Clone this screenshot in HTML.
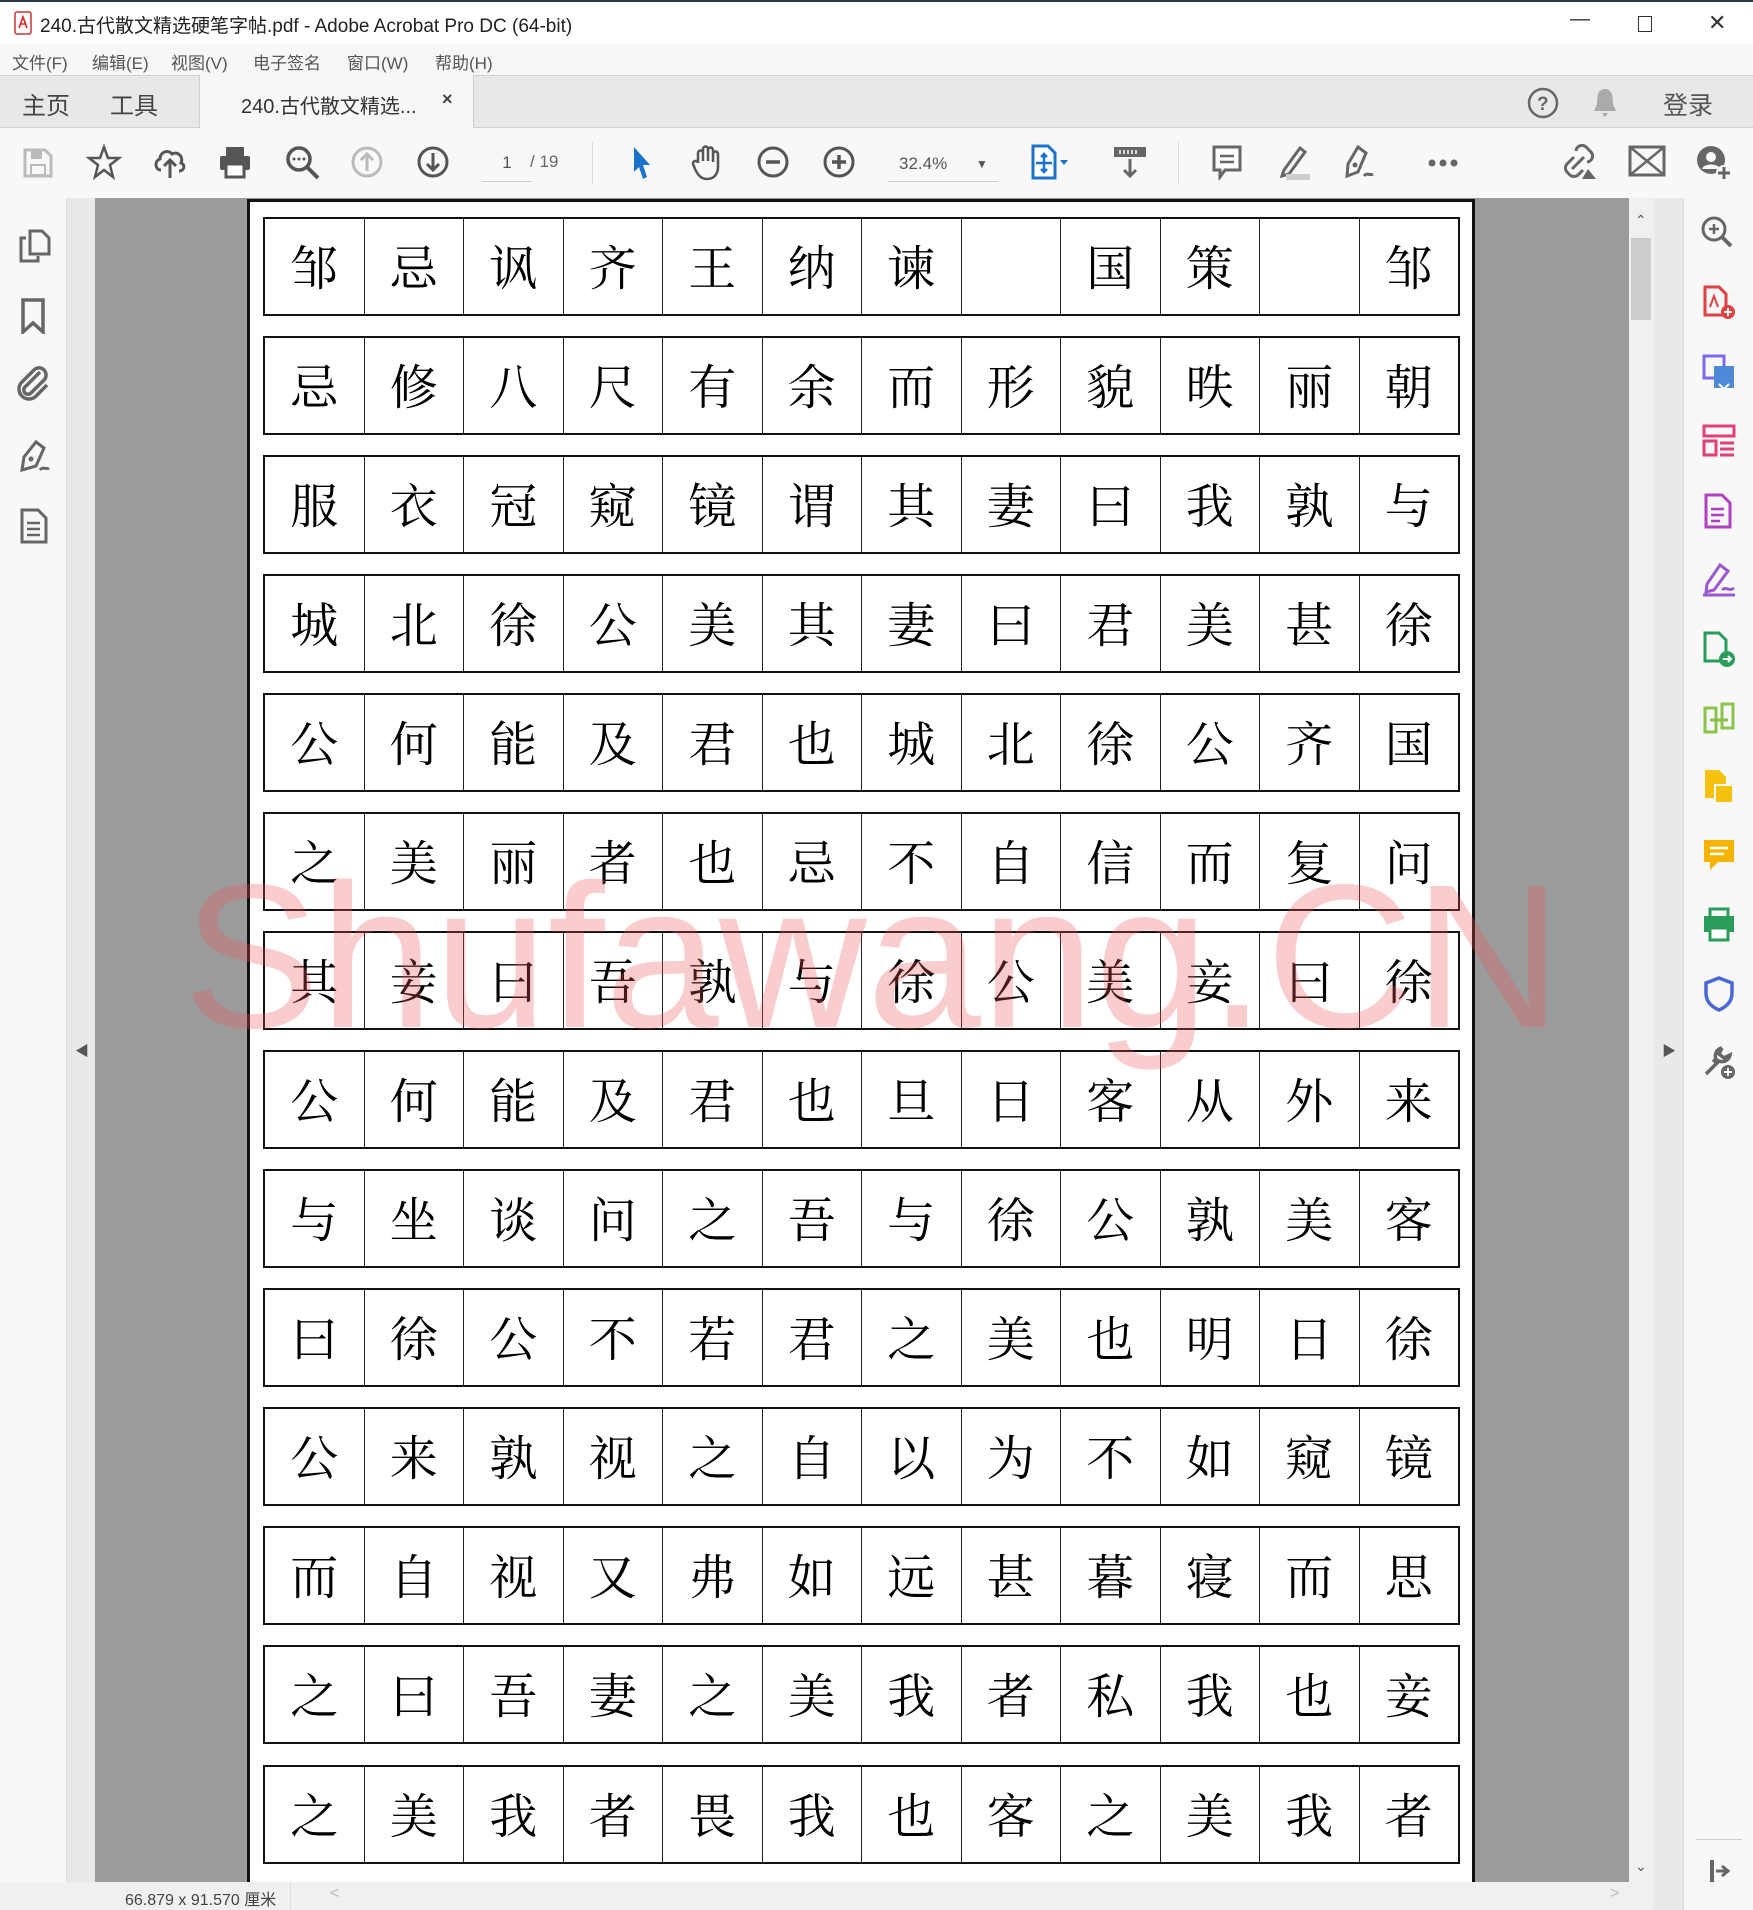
<!DOCTYPE html>
<html><head><meta charset="utf-8"><style>
*{margin:0;padding:0;box-sizing:border-box}
body{width:1753px;height:1910px;position:relative;overflow:hidden;background:#fff;font-family:"Liberation Sans","Noto Sans CJK SC",sans-serif;color:#333}
.a{position:absolute}
#title{left:0;top:0;width:1753px;height:44px;background:#fff;border-top:2px solid #2b3a4a}
#menu{left:0;top:44px;width:1753px;height:31px;background:#f7f7f7;font-size:17px;color:#555}
#menu span{position:absolute;top:5px}
#tabs{left:0;top:75px;width:1753px;height:53px;background:#e8e8e8;border-top:1px solid #d0d0d0;border-bottom:1px solid #d0d0d0}
#tb{left:0;top:128px;width:1753px;height:70px;background:#f8f8f8}
#lp{left:0;top:198px;width:67px;height:1684px;background:#f8f8f8;border-right:1px solid #ddd}
#ls{left:67px;top:198px;width:28px;height:1684px;background:#e9e9e9}
#gray{left:95px;top:198px;width:1534px;height:1684px;background:#9b9b9b}
#sb{left:1629px;top:198px;width:25px;height:1684px;background:#f0f0f0}
#rs{left:1654px;top:198px;width:29px;height:1712px;background:#e9e9e9}
#rp{left:1683px;top:198px;width:70px;height:1712px;background:#f8f8f8;border-left:1px solid #ddd}
#status{left:0;top:1882px;width:1654px;height:28px;background:#f0f0f0;font-size:16px;color:#444}
#page{left:247px;top:199px;width:1228px;height:1683px;background:#fff;border:3px solid #111;border-bottom:none}
.row{position:absolute;left:263px;width:1197px;height:99px;border:2px solid #111;display:flex}
.row div{flex:1;border-right:1.5px solid #222;font-family:"Noto Serif CJK SC","WenQuanYi Zen Hei",serif;font-weight:400;font-size:48px;line-height:92px;text-align:center;color:#000}
.row div:last-child{border-right:none}
#wm{left:183px;top:854px;font-size:205px;line-height:205px;color:rgba(235,90,90,0.3);font-family:"Liberation Sans",sans-serif;white-space:nowrap}
.ic{position:absolute}
</style></head><body>
<div id="title" class="a">
<svg class="ic" style="left:14px;top:9px" width="18" height="24"><rect x="1" y="1" width="16" height="22" rx="2" fill="#fff" stroke="#c33" stroke-width="1.5"/><path d="M5 17 L9 6 L13 17 M6 13 H12" stroke="#d22" stroke-width="1.6" fill="none"/></svg>
<span class="a" style="left:40px;top:9px;font-size:19px;color:#222">240.古代散文精选硬笔字帖.pdf - Adobe Acrobat Pro DC (64-bit)</span>
<span class="a" style="left:1570px;top:6px;font-size:20px;color:#333">—</span>
<div class="a" style="left:1638px;top:14px;width:14px;height:16px;border:1.5px solid #333"></div>
<span class="a" style="left:1708px;top:8px;font-size:22px;color:#333">✕</span>
</div>
<div id="menu" class="a"><span style="left:12px">文件(F)</span><span style="left:92px">编辑(E)</span><span style="left:171px">视图(V)</span><span style="left:253px">电子签名</span><span style="left:347px">窗口(W)</span><span style="left:435px">帮助(H)</span></div>
<div id="tabs" class="a">
<span class="a" style="left:22px;top:10px;font-size:24px;color:#444">主页</span>
<span class="a" style="left:110px;top:10px;font-size:24px;color:#444">工具</span>
<div class="a" style="left:199px;top:-1px;width:275px;height:54px;background:#f7f7f7;border-left:1px solid #d0d0d0;border-right:1px solid #d0d0d0"></div>
<span class="a" style="left:241px;top:14px;font-size:20px;color:#333">240.古代散文精选...</span>
<span class="a" style="left:442px;top:13px;font-size:18px;color:#444;font-weight:bold">×</span>
<svg class="ic" style="left:1526px;top:10px" width="34" height="34"><circle cx="17" cy="17" r="14" fill="none" stroke="#666" stroke-width="2.5"/><text x="11" y="24" font-size="19" font-weight="bold" fill="#666" font-family="Liberation Sans">?</text></svg>
<svg class="ic" style="left:1590px;top:10px" width="30" height="34"><path d="M15 3 C8 3 7 10 7 18 L4 25 H26 L23 18 C23 10 22 3 15 3Z M12 27 H18 L15 31Z" fill="#aaa"/></svg>
<span class="a" style="left:1663px;top:10px;font-size:25px;color:#555">登录</span>
</div>
<div id="tb" class="a">
<svg class="ic" style="left:22px;top:19px" width="32" height="32"><path d="M3 3 H23 L29 9 V29 H3Z" fill="none" stroke="#bbb" stroke-width="3"/><rect x="9" y="4" width="11" height="8" fill="#bbb"/><rect x="9" y="18" width="14" height="10" fill="none" stroke="#bbb" stroke-width="2"/></svg>
<svg class="ic" style="left:86px;top:16px" width="36" height="36"><path d="M18 3 L22 14 H33 L24 21 L27 33 L18 26 L9 33 L12 21 L3 14 H14Z" fill="none" stroke="#555" stroke-width="2.5"/></svg>
<svg class="ic" style="left:152px;top:16px" width="36" height="36"><path d="M9 26 C3 26 2 17 8 15 C8 8 16 5 20 10 C25 7 32 12 29 19 C34 21 32 27 27 27" fill="none" stroke="#555" stroke-width="3"/><path d="M18 34 V16 M12 22 L18 16 L24 22" stroke="#555" stroke-width="3" fill="none"/></svg>
<svg class="ic" style="left:217px;top:16px" width="36" height="36"><rect x="9" y="3" width="18" height="9" fill="#555"/><rect x="3" y="12" width="30" height="14" rx="2" fill="#555"/><rect x="9" y="20" width="18" height="13" fill="#fff" stroke="#555" stroke-width="3"/></svg>
<svg class="ic" style="left:284px;top:16px" width="38" height="38"><circle cx="15" cy="15" r="11" fill="none" stroke="#555" stroke-width="3.5"/><path d="M23 23 L34 34" stroke="#555" stroke-width="4"/><circle cx="10" cy="15" r="1.5" fill="#555"/><circle cx="15" cy="15" r="1.5" fill="#555"/><circle cx="20" cy="15" r="1.5" fill="#555"/></svg>
<svg class="ic" style="left:350px;top:17px" width="34" height="34"><circle cx="17" cy="17" r="14" fill="none" stroke="#bbb" stroke-width="3"/><path d="M17 26 V9 M11 15 L17 9 L23 15" stroke="#bbb" stroke-width="3" fill="none"/></svg>
<svg class="ic" style="left:416px;top:17px" width="34" height="34"><circle cx="17" cy="17" r="14" fill="none" stroke="#555" stroke-width="3"/><path d="M17 8 V25 M11 19 L17 25 L23 19" stroke="#555" stroke-width="3" fill="none"/></svg>
<div class="a" style="left:482px;top:20px;width:50px;height:34px;border-bottom:1px solid #ccc;font-size:17px;text-align:center;line-height:30px;color:#555">1</div>
<span class="a" style="left:530px;top:24px;font-size:17px;color:#666">/ 19</span>
<div class="a" style="left:592px;top:14px;width:1px;height:42px;background:#ddd"></div>
<svg class="ic" style="left:630px;top:17px" width="24" height="36"><path d="M4 2 L20 20 H13 L17 32 L13 34 L9 22 L4 27Z" fill="#1b73c9"/></svg>
<svg class="ic" style="left:690px;top:15px" width="36" height="38"><path d="M8 20 V10 a2.5 2.5 0 0 1 5 0 V18 V6 a2.5 2.5 0 0 1 5 0 V18 V7 a2.5 2.5 0 0 1 5 0 V19 V11 a2.5 2.5 0 0 1 5 0 V24 C28 32 23 36 17 36 C11 36 8 32 5 26 L3 21 a2.5 2.5 0 0 1 5 -1" fill="none" stroke="#555" stroke-width="2.5"/></svg>
<svg class="ic" style="left:756px;top:17px" width="34" height="34"><circle cx="17" cy="17" r="14" fill="none" stroke="#555" stroke-width="3"/><path d="M10 17 H24" stroke="#555" stroke-width="3.5"/></svg>
<svg class="ic" style="left:822px;top:17px" width="34" height="34"><circle cx="17" cy="17" r="14" fill="none" stroke="#555" stroke-width="3"/><path d="M10 17 H24 M17 10 V24" stroke="#555" stroke-width="3.5"/></svg>
<div class="a" style="left:888px;top:20px;width:110px;height:34px;border-bottom:1px solid #ccc;font-size:17px;line-height:32px;color:#555;padding-left:11px">32.4%<span style="position:absolute;left:88px;font-size:12px">▼</span></div>
<svg class="ic" style="left:1030px;top:16px" width="38" height="38"><path d="M3 2 H18 L25 9 V34 H3Z" fill="#fff" stroke="#1b73c9" stroke-width="3"/><path d="M14 10 V28 M6 19 H22 M11 13 L14 10 L17 13 M11 25 L14 28 L17 25" stroke="#1b73c9" stroke-width="2.5" fill="none"/><path d="M30 16 H38 L34 21Z" fill="#1b73c9"/></svg>
<svg class="ic" style="left:1112px;top:16px" width="36" height="36"><rect x="2" y="3" width="32" height="10" fill="#666"/><path d="M8 6 V10 M12 6 V10 M16 6 V10 M20 6 V10 M24 6 V10" stroke="#fff" stroke-width="1.5"/><path d="M18 15 V32 M12 26 L18 32 L24 26" stroke="#666" stroke-width="3" fill="none"/></svg>
<div class="a" style="left:1178px;top:14px;width:1px;height:42px;background:#ddd"></div>
<svg class="ic" style="left:1210px;top:16px" width="34" height="36"><path d="M4 3 H30 V26 H15 L10 33 V26 H4Z" fill="#fff" stroke="#666" stroke-width="3"/><path d="M10 12 H24 M10 18 H24" stroke="#666" stroke-width="2.5"/></svg>
<svg class="ic" style="left:1272px;top:14px" width="40" height="40"><path d="M12 28 L28 6 L33 10 L17 32 L10 34Z" fill="none" stroke="#666" stroke-width="3"/><rect x="14" y="32" width="24" height="6" fill="#ccc"/></svg>
<svg class="ic" style="left:1338px;top:14px" width="40" height="40"><path d="M20 5 L28 11 L20 30 L9 34 L10 22Z" fill="none" stroke="#666" stroke-width="3"/><circle cx="17" cy="23" r="2.5" fill="#666"/><path d="M26 34 C29 30 32 34 35 32" stroke="#666" stroke-width="3" fill="none"/></svg>
<svg class="ic" style="left:1428px;top:31px" width="30" height="8"><circle cx="4" cy="4" r="3.5" fill="#666"/><circle cx="15" cy="4" r="3.5" fill="#666"/><circle cx="26" cy="4" r="3.5" fill="#666"/></svg>
<svg class="ic" style="left:1560px;top:15px" width="40" height="40"><path d="M16 8 a6 6 0 0 1 10 -4 l5 5 a6 6 0 0 1 -4 10 M14 14 l-7 7 a6 6 0 0 0 0 8 l3 3 a6 6 0 0 0 8 0 l5 -5 M12 26 L24 14" fill="none" stroke="#666" stroke-width="3"/><path d="M22 36 L28 26 L36 36Z" fill="#666"/></svg>
<svg class="ic" style="left:1628px;top:17px" width="38" height="34"><rect x="2" y="2" width="34" height="28" fill="none" stroke="#666" stroke-width="3"/><path d="M2 2 L36 30 M36 2 L2 30" stroke="#666" stroke-width="2.5"/></svg>
<svg class="ic" style="left:1694px;top:15px" width="40" height="40"><circle cx="17" cy="17" r="14" fill="#666"/><circle cx="17" cy="14" r="5" fill="#f8f8f8"/><path d="M8 26 C10 20 24 20 26 26" fill="#f8f8f8"/><circle cx="30" cy="30" r="8" fill="#f8f8f8"/><path d="M30 24 V36 M24 30 H36" stroke="#666" stroke-width="3"/></svg>
</div>
<div id="lp" class="a">
<svg class="ic" style="left:18px;top:30px" width="34" height="36"><path d="M12 3 H24 L31 10 V26 H12Z" fill="none" stroke="#666" stroke-width="3"/><path d="M8 10 H3 V33 H20 V28" fill="none" stroke="#666" stroke-width="3"/></svg>
<svg class="ic" style="left:20px;top:100px" width="26" height="36"><path d="M3 2 H23 V34 L13 25 L3 34Z" fill="none" stroke="#666" stroke-width="3.5"/></svg>
<svg class="ic" style="left:16px;top:168px" width="34" height="36"><path d="M24 6 L9 21 a4 4 0 0 0 6 6 L28 14 a7 7 0 0 0 -10 -10 L5 17 a10 10 0 0 0 14 14 L31 19" fill="none" stroke="#666" stroke-width="3.5"/></svg>
<svg class="ic" style="left:14px;top:240px" width="38" height="36"><path d="M22 4 L30 10 L22 28 L8 32 L10 19Z" fill="none" stroke="#666" stroke-width="3"/><circle cx="17" cy="21" r="2.5" fill="#666"/><path d="M26 32 C29 28 32 32 35 30" stroke="#666" stroke-width="3" fill="none"/></svg>
<svg class="ic" style="left:20px;top:310px" width="28" height="36"><path d="M2 2 H18 L26 10 V34 H2Z" fill="none" stroke="#666" stroke-width="3"/><path d="M7 15 H20 M7 21 H20 M7 27 H20" stroke="#666" stroke-width="2.5"/></svg>
</div>
<div id="ls" class="a"><span class="a" style="left:8px;top:843px;font-size:14px;color:#555">◀</span></div>
<div id="gray" class="a"></div>
<div id="sb" class="a"><div class="a" style="left:2px;top:40px;width:20px;height:82px;background:#ccc"></div><span class="a" style="left:6px;top:14px;font-size:14px;color:#555">⌃</span><span class="a" style="left:6px;top:1660px;font-size:14px;color:#555">⌄</span></div>
<div id="rs" class="a"><span class="a" style="left:8px;top:843px;font-size:14px;color:#555">▶</span></div>
<div id="rp" class="a">
<svg class="ic" style="left:16px;top:17px" width="34" height="34"><circle cx="14" cy="14" r="11" fill="none" stroke="#666" stroke-width="3"/><path d="M22 22 L31 31" stroke="#666" stroke-width="4"/><path d="M9 14 H19 M14 9 V19" stroke="#666" stroke-width="2.5"/></svg>
<svg class="ic" style="left:18px;top:87px" width="34" height="36"><path d="M3 2 H17 L24 9 V30 H3Z" fill="none" stroke="#e04040" stroke-width="3"/><path d="M8 22 L12 11 L16 22" stroke="#e04040" stroke-width="2" fill="none"/><circle cx="26" cy="27" r="7" fill="#e04040"/><path d="M26 23 V31 M22 27 H30" stroke="#fff" stroke-width="2"/></svg>
<svg class="ic" style="left:18px;top:156px" width="34" height="38"><rect x="2" y="2" width="20" height="22" fill="none" stroke="#7b68ee" stroke-width="3"/><rect x="12" y="12" width="20" height="22" fill="#4f8ad9"/><path d="M17 30 L22 35 L27 30" stroke="#fff" stroke-width="2" fill="none"/></svg>
<svg class="ic" style="left:18px;top:226px" width="34" height="34"><rect x="2" y="2" width="30" height="10" fill="none" stroke="#e0407a" stroke-width="3"/><rect x="2" y="17" width="12" height="14" fill="none" stroke="#e0407a" stroke-width="3"/><path d="M18 19 H32 M18 25 H32 M18 31 H32" stroke="#e0407a" stroke-width="3"/></svg>
<svg class="ic" style="left:20px;top:295px" width="30" height="36"><path d="M2 2 H18 L26 10 V34 H2Z" fill="none" stroke="#b040c0" stroke-width="3"/><path d="M7 16 H20 M7 22 H20 M7 28 H16" stroke="#b040c0" stroke-width="2.5"/></svg>
<svg class="ic" style="left:16px;top:364px" width="38" height="36"><path d="M20 3 L28 9 L14 28 L6 30 L7 22Z" fill="none" stroke="#9b59d0" stroke-width="3"/><path d="M3 33 H35 M22 28 C26 24 29 30 34 26" stroke="#9b59d0" stroke-width="3" fill="none"/></svg>
<svg class="ic" style="left:18px;top:433px" width="34" height="38"><path d="M3 2 H17 L24 9 V30 H3Z" fill="none" stroke="#2a9d5a" stroke-width="3"/><circle cx="25" cy="28" r="8" fill="#2a9d5a"/><path d="M21 28 H29 M26 25 L29 28 L26 31" stroke="#fff" stroke-width="2" fill="none"/></svg>
<svg class="ic" style="left:18px;top:502px" width="34" height="36"><path d="M3 8 H14 V32 H3Z M20 4 H31 V28 H20Z" fill="none" stroke="#8bc34a" stroke-width="3"/><path d="M8 20 H26" stroke="#8bc34a" stroke-width="3"/></svg>
<svg class="ic" style="left:18px;top:570px" width="34" height="38"><path d="M3 2 H17 L24 9 V30 H3Z" fill="#f4c20d"/><rect x="13" y="17" width="18" height="18" fill="#f4c20d" stroke="#f8f8f8" stroke-width="2"/></svg>
<svg class="ic" style="left:18px;top:640px" width="34" height="36"><path d="M2 2 H32 V24 H16 L8 32 V24 H2Z" fill="#f4b400"/><path d="M8 10 H26 M8 16 H22" stroke="#fff" stroke-width="2.5"/></svg>
<svg class="ic" style="left:16px;top:708px" width="38" height="38"><rect x="4" y="10" width="30" height="16" fill="#2a9d5a"/><rect x="10" y="3" width="18" height="9" fill="none" stroke="#2a9d5a" stroke-width="3"/><rect x="10" y="22" width="18" height="12" fill="#fff" stroke="#2a9d5a" stroke-width="3"/></svg>
<svg class="ic" style="left:20px;top:778px" width="30" height="36"><path d="M15 2 L28 7 V17 C28 26 22 31 15 34 C8 31 2 26 2 17 V7Z" fill="none" stroke="#4a67d6" stroke-width="3.5"/></svg>
<svg class="ic" style="left:16px;top:846px" width="38" height="38"><path d="M6 30 L20 16 M22 4 a8 8 0 0 0 -6 11 l-3 3 M22 4 L19 10 L24 14 L30 11 a8 8 0 0 1 -11 6" fill="none" stroke="#666" stroke-width="3.5"/><circle cx="28" cy="28" r="7" fill="#666"/><path d="M28 24 V32 M24 28 H32" stroke="#fff" stroke-width="2"/></svg>
<div class="a" style="left:12px;top:1641px;width:46px;height:1px;background:#ccc"></div>
<svg class="ic" style="left:24px;top:1660px" width="26" height="28"><rect x="2" y="2" width="4" height="22" fill="#666"/><path d="M8 13 H18 M14 8 L20 13 L14 18" stroke="#666" stroke-width="3" fill="none"/></svg>
</div>
<div id="status" class="a"><span class="a" style="left:125px;top:4px">66.879 x 91.570 厘米</span><div class="a" style="left:290px;top:0;width:1px;height:28px;background:#ddd"></div><span class="a" style="left:330px;top:3px;color:#bbb">&lt;</span><span class="a" style="left:1610px;top:3px;color:#bbb">&gt;</span></div>
<div id="page" class="a"></div>
<div class="row" style="top:217px"><div>邹</div><div>忌</div><div>讽</div><div>齐</div><div>王</div><div>纳</div><div>谏</div><div></div><div>国</div><div>策</div><div></div><div>邹</div></div>
<div class="row" style="top:336px"><div>忌</div><div>修</div><div>八</div><div>尺</div><div>有</div><div>余</div><div>而</div><div>形</div><div>貌</div><div>昳</div><div>丽</div><div>朝</div></div>
<div class="row" style="top:455px"><div>服</div><div>衣</div><div>冠</div><div>窥</div><div>镜</div><div>谓</div><div>其</div><div>妻</div><div>曰</div><div>我</div><div>孰</div><div>与</div></div>
<div class="row" style="top:574px"><div>城</div><div>北</div><div>徐</div><div>公</div><div>美</div><div>其</div><div>妻</div><div>曰</div><div>君</div><div>美</div><div>甚</div><div>徐</div></div>
<div class="row" style="top:693px"><div>公</div><div>何</div><div>能</div><div>及</div><div>君</div><div>也</div><div>城</div><div>北</div><div>徐</div><div>公</div><div>齐</div><div>国</div></div>
<div class="row" style="top:812px"><div>之</div><div>美</div><div>丽</div><div>者</div><div>也</div><div>忌</div><div>不</div><div>自</div><div>信</div><div>而</div><div>复</div><div>问</div></div>
<div class="row" style="top:931px"><div>其</div><div>妾</div><div>曰</div><div>吾</div><div>孰</div><div>与</div><div>徐</div><div>公</div><div>美</div><div>妾</div><div>曰</div><div>徐</div></div>
<div class="row" style="top:1050px"><div>公</div><div>何</div><div>能</div><div>及</div><div>君</div><div>也</div><div>旦</div><div>日</div><div>客</div><div>从</div><div>外</div><div>来</div></div>
<div class="row" style="top:1169px"><div>与</div><div>坐</div><div>谈</div><div>问</div><div>之</div><div>吾</div><div>与</div><div>徐</div><div>公</div><div>孰</div><div>美</div><div>客</div></div>
<div class="row" style="top:1288px"><div>曰</div><div>徐</div><div>公</div><div>不</div><div>若</div><div>君</div><div>之</div><div>美</div><div>也</div><div>明</div><div>日</div><div>徐</div></div>
<div class="row" style="top:1407px"><div>公</div><div>来</div><div>孰</div><div>视</div><div>之</div><div>自</div><div>以</div><div>为</div><div>不</div><div>如</div><div>窥</div><div>镜</div></div>
<div class="row" style="top:1526px"><div>而</div><div>自</div><div>视</div><div>又</div><div>弗</div><div>如</div><div>远</div><div>甚</div><div>暮</div><div>寝</div><div>而</div><div>思</div></div>
<div class="row" style="top:1645px"><div>之</div><div>曰</div><div>吾</div><div>妻</div><div>之</div><div>美</div><div>我</div><div>者</div><div>私</div><div>我</div><div>也</div><div>妾</div></div>
<div class="row" style="top:1765px"><div>之</div><div>美</div><div>我</div><div>者</div><div>畏</div><div>我</div><div>也</div><div>客</div><div>之</div><div>美</div><div>我</div><div>者</div></div>
<div id="wm" class="a">Shufawang.CN</div>
</body></html>
